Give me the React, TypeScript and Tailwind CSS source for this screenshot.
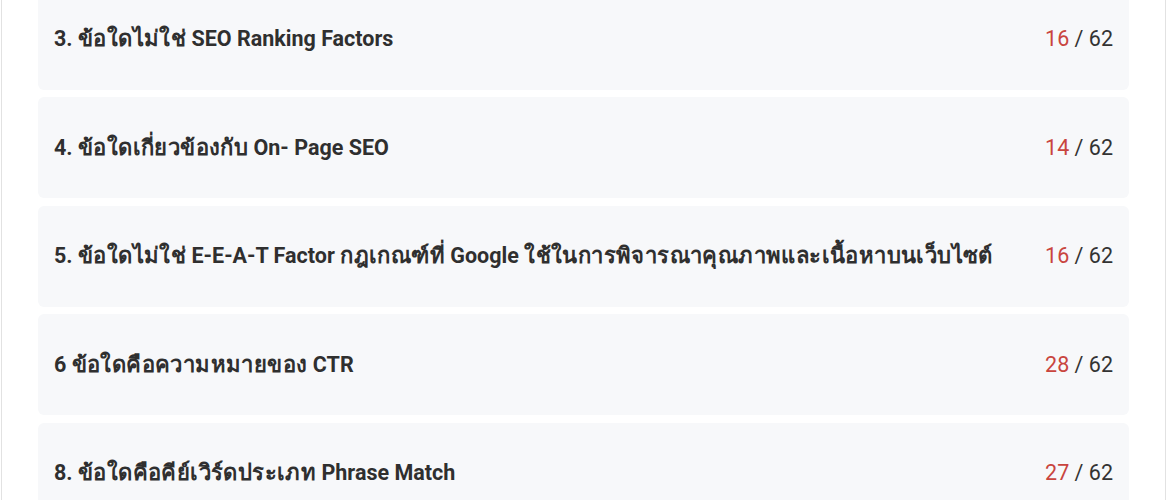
const items = [
  { title: "3. ข้อใดไม่ใช่ SEO Ranking Factors", score: 16, total: 62 },
  { title: "4. ข้อใดเกี่ยวข้องกับ On- Page SEO", score: 14, total: 62 },
  {
    title:
      "5. ข้อใดไม่ใช่ E-E-A-T Factor กฎเกณฑ์ที่ Google ใช้ในการพิจารณาคุณภาพและเนื้อหาบนเว็บไซต์",
    score: 16,
    total: 62,
  },
  { title: "6 ข้อใดคือความหมายของ CTR", score: 28, total: 62 },
  { title: "8. ข้อใดคือคีย์เวิร์ดประเภท Phrase Match", score: 27, total: 62 },
];

// thai runs render a bit larger so they match the wider thai face in the design
const Title = ({ text }: { text: string }) => {
  const parts = text.split(/([\u0E00-\u0E7F]+)/).filter(Boolean);
  return (
    <h3 className="whitespace-nowrap text-[21.5px] font-bold leading-7 text-[#2f2f2f]">
      {parts.map((p, i) =>
        /[\u0E00-\u0E7F]/.test(p) ? (
          <span key={i} className="text-[22px] leading-none tracking-[0.4px]">
            {p}
          </span>
        ) : (
          <span key={i}>{p}</span>
        )
      )}
    </h3>
  );
};

const App = () => {
  return (
    <div className="h-[500px] overflow-hidden bg-white font-[family-name:Roboto,sans-serif]">
      <div className="ml-[1px] min-h-full border-x border-[#e2e2e2] px-9">
        <div className="-mt-[11.5px] flex flex-col gap-[7.5px]">
          {items.map((item, idx) => (
            <div
              key={idx}
              className="flex h-[101px] items-center justify-between gap-4 rounded-md bg-[#f7f8fa] px-4"
            >
              <Title text={item.title} />
              <span className="shrink-0 whitespace-nowrap text-[21.5px] leading-7 text-[#333333]">
                <span className="text-[#c9453e]">{item.score}</span> / {item.total}
              </span>
            </div>
          ))}
        </div>
      </div>
    </div>
  );
};

export default App;
